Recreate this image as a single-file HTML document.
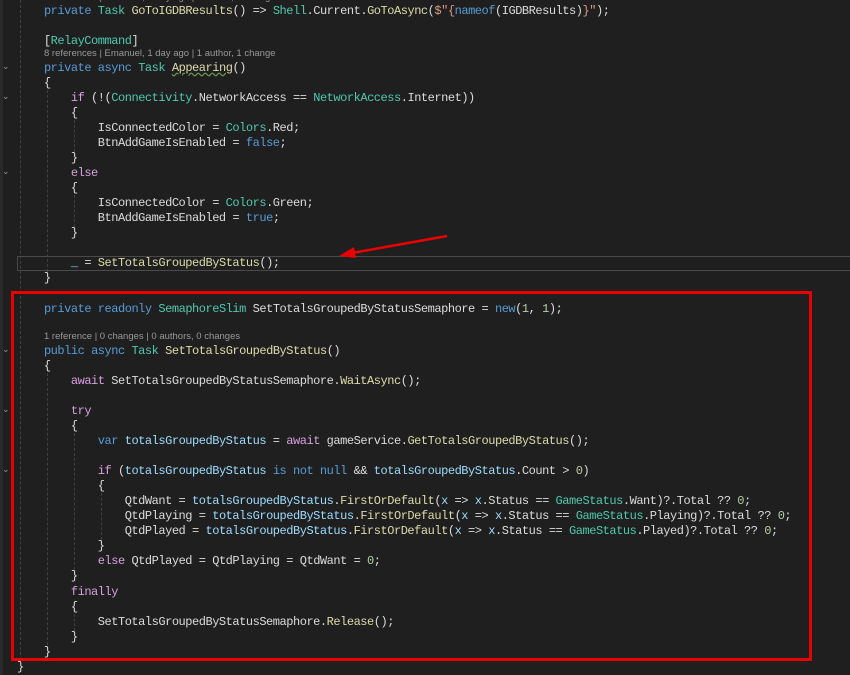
<!DOCTYPE html>
<html><head><meta charset="utf-8"><style>
html,body{margin:0;padding:0;width:850px;height:675px;overflow:hidden;background:#1f1f1f}
.l{position:absolute;left:17px;height:15px;line-height:15px;font-family:"Liberation Mono",monospace;font-size:12px;letter-spacing:-0.47px;color:#dcdcdc;white-space:pre;margin-top:1px}
.cl{position:absolute;left:44px;font-family:"Liberation Sans",sans-serif;font-size:9.5px;color:#999;line-height:12px;white-space:pre}
.k{color:#569cd6}.c{color:#d8a0df}.t{color:#4ec9b0}.m{color:#dcdcaa}.v{color:#9cdcfe}.n{color:#b5cea8}.s{color:#d69d85}
.g{position:absolute;width:0;border-left:1px dashed #404040}
.f{position:absolute;left:2px;color:#999;font-family:"DejaVu Sans",sans-serif;font-size:9px;line-height:10px}
</style></head><body>
<div class="g" style="left:20px;top:0;height:660px"></div>
<div class="g" style="left:47px;top:90px;height:182px"></div>
<div class="g" style="left:47px;top:373px;height:272px"></div>
<div class="g" style="left:74px;top:120px;height:32px"></div>
<div class="g" style="left:74px;top:195px;height:32px"></div>
<div class="g" style="left:74px;top:433px;height:137px"></div>
<div class="g" style="left:74px;top:614px;height:17px"></div>
<div class="g" style="left:101px;top:493px;height:47px"></div>
<div style="position:absolute;left:0;top:0;width:3px;height:675px;background:#2a2a2a"></div>
<div style="position:absolute;left:17px;top:256px;width:833px;height:13px;border-top:1px solid #4a4a4a;border-bottom:1px solid #4a4a4a;border-left:1px solid #4a4a4a"></div>
<div class="f" style="top:62px">⌄</div><div class="f" style="top:92px">⌄</div><div class="f" style="top:167px">⌄</div>
<div class="f" style="top:345px">⌄</div><div class="f" style="top:405px">⌄</div><div class="f" style="top:465px">⌄</div>
<div class="cl" style="top:-8px">8 references | Emanuel, 1 day ago | 1 author, 1 change</div>
<div class="l" style="top:3px">    <span class="k">private</span> <span class="t">Task</span> <span class="m">GoToIGDBResults</span>() =&gt; <span class="t">Shell</span>.Current.<span class="m">GoToAsync</span>(<span class="s">$"{</span><span class="k">nameof</span>(IGDBResults)<span class="s">}"</span>);</div>
<div class="l" style="top:33px">    [<span class="t">RelayCommand</span>]</div>
<div class="cl" style="top:48px">8 references | Emanuel, 1 day ago | 1 author, 1 change</div>
<div class="l" style="top:60px">    <span class="k">private</span> <span class="k">async</span> <span class="t">Task</span> <span class="m" style="text-decoration:underline wavy #6a9955">Appearing</span>()</div>
<div class="l" style="top:75px">    {</div>
<div class="l" style="top:90px">        <span class="c">if</span> (!(<span class="t">Connectivity</span>.NetworkAccess == <span class="t">NetworkAccess</span>.Internet))</div>
<div class="l" style="top:105px">        {</div>
<div class="l" style="top:120px">            IsConnectedColor = <span class="t">Colors</span>.Red;</div>
<div class="l" style="top:135px">            BtnAddGameIsEnabled = <span class="k">false</span>;</div>
<div class="l" style="top:150px">        }</div>
<div class="l" style="top:165px">        <span class="c">else</span></div>
<div class="l" style="top:180px">        {</div>
<div class="l" style="top:195px">            IsConnectedColor = <span class="t">Colors</span>.Green;</div>
<div class="l" style="top:210px">            BtnAddGameIsEnabled = <span class="k">true</span>;</div>
<div class="l" style="top:225px">        }</div>
<div class="l" style="top:255px">        <span class="v">_</span> = <span class="m">SetTotalsGroupedByStatus</span>();</div>
<div class="l" style="top:270px">    }</div>
<div class="l" style="top:301px">    <span class="k">private</span> <span class="k">readonly</span> <span class="t">SemaphoreSlim</span> SetTotalsGroupedByStatusSemaphore = <span class="k">new</span>(<span class="n">1</span>, <span class="n">1</span>);</div>
<div class="cl" style="top:331px">1 reference | 0 changes | 0 authors, 0 changes</div>
<div class="l" style="top:343px">    <span class="k">public</span> <span class="k">async</span> <span class="t">Task</span> <span class="m">SetTotalsGroupedByStatus</span>()</div>
<div class="l" style="top:358px">    {</div>
<div class="l" style="top:373px">        <span class="c">await</span> SetTotalsGroupedByStatusSemaphore.<span class="m">WaitAsync</span>();</div>
<div class="l" style="top:403px">        <span class="c">try</span></div>
<div class="l" style="top:418px">        {</div>
<div class="l" style="top:433px">            <span class="k">var</span> <span class="v">totalsGroupedByStatus</span> = <span class="c">await</span> gameService.<span class="m">GetTotalsGroupedByStatus</span>();</div>
<div class="l" style="top:463px">            <span class="c">if</span> (<span class="v">totalsGroupedByStatus</span> <span class="k">is not null</span> &amp;&amp; <span class="v">totalsGroupedByStatus</span>.Count &gt; <span class="n">0</span>)</div>
<div class="l" style="top:478px">            {</div>
<div class="l" style="top:493px">                QtdWant = <span class="v">totalsGroupedByStatus</span>.<span class="m">FirstOrDefault</span>(<span class="v">x</span> =&gt; <span class="v">x</span>.Status == <span class="t">GameStatus</span>.Want)?.Total ?? <span class="n">0</span>;</div>
<div class="l" style="top:508px">                QtdPlaying = <span class="v">totalsGroupedByStatus</span>.<span class="m">FirstOrDefault</span>(<span class="v">x</span> =&gt; <span class="v">x</span>.Status == <span class="t">GameStatus</span>.Playing)?.Total ?? <span class="n">0</span>;</div>
<div class="l" style="top:523px">                QtdPlayed = <span class="v">totalsGroupedByStatus</span>.<span class="m">FirstOrDefault</span>(<span class="v">x</span> =&gt; <span class="v">x</span>.Status == <span class="t">GameStatus</span>.Played)?.Total ?? <span class="n">0</span>;</div>
<div class="l" style="top:538px">            }</div>
<div class="l" style="top:553px">            <span class="c">else</span> QtdPlayed = QtdPlaying = QtdWant = <span class="n">0</span>;</div>
<div class="l" style="top:568px">        }</div>
<div class="l" style="top:584px">        <span class="c">finally</span></div>
<div class="l" style="top:599px">        {</div>
<div class="l" style="top:614px">            SetTotalsGroupedByStatusSemaphore.<span class="m">Release</span>();</div>
<div class="l" style="top:629px">        }</div>
<div class="l" style="top:644px">    }</div>
<div class="l" style="top:659px">}</div>
<div style="position:absolute;left:11px;top:291px;width:795px;height:364px;border:3px solid #e80000"></div>
<svg style="position:absolute;left:0;top:0" width="850" height="675">
<line x1="447" y1="236" x2="352" y2="253" stroke="#e80000" stroke-width="2.5"/>
<polygon points="339,256 354,247 356,258" fill="#e80000"/>
</svg>
</body></html>
